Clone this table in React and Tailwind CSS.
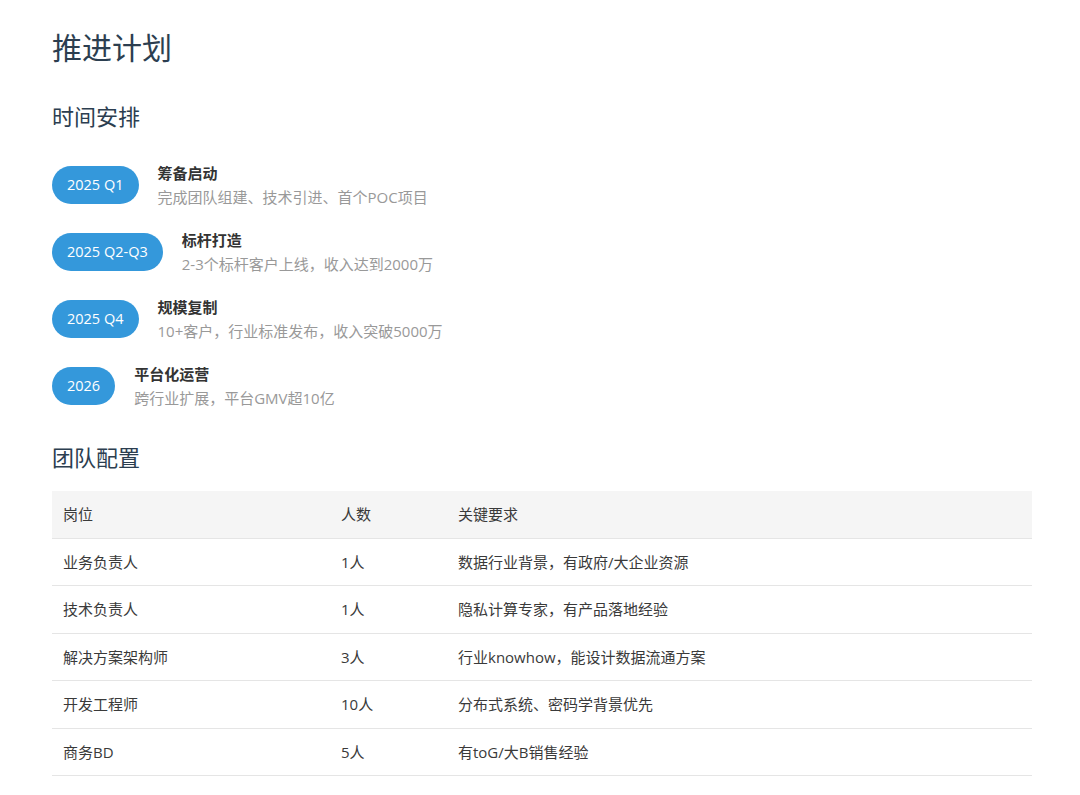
import React from "react";

const milestones = [
  { time: "2025 Q1", title: "筹备启动", desc: "完成团队组建、技术引进、首个POC项目" },
  { time: "2025 Q2-Q3", title: "标杆打造", desc: "2-3个标杆客户上线，收入达到2000万" },
  { time: "2025 Q4", title: "规模复制", desc: "10+客户，行业标准发布，收入突破5000万" },
  { time: "2026", title: "平台化运营", desc: "跨行业扩展，平台GMV超10亿" },
];

const team = [
  { role: "业务负责人", count: "1人", req: "数据行业背景，有政府/大企业资源" },
  { role: "技术负责人", count: "1人", req: "隐私计算专家，有产品落地经验" },
  { role: "解决方案架构师", count: "3人", req: "行业knowhow，能设计数据流通方案" },
  { role: "开发工程师", count: "10人", req: "分布式系统、密码学背景优先" },
  { role: "商务BD", count: "5人", req: "有toG/大B销售经验" },
];

const App = () => {
  return (
    <div
      className="bg-white min-h-screen pt-[30px] pl-[52px] pb-10"
      style={{ fontFamily: '"Open Sans", "Noto Sans CJK SC", sans-serif' }}
    >
      <div className="w-[980px]">
        <h1 className="text-[30px] leading-[36px] text-[#2c3e50]">推进计划</h1>

        <h2 className="mt-[36px] text-[22px] leading-[29px] text-[#2c3e50]">时间安排</h2>

        {/* timeline */}
        <div className="mt-[30px] flex flex-col gap-[19px]">
          {milestones.map((m) => (
            <div key={m.time} className="flex items-center gap-[19px] h-[48px]">
              <span className="rounded-full bg-[#3498db] text-white text-[14.5px] leading-[18px] px-[15px] py-[10px] whitespace-nowrap">
                {m.time}
              </span>
              <div className="flex flex-col">
                <p className="text-[15px] leading-[24px] font-bold text-[#333]">{m.title}</p>
                <p className="text-[15px] leading-[24px] text-[#999]">{m.desc}</p>
              </div>
            </div>
          ))}
        </div>

        <h2 className="mt-[33px] text-[22px] leading-[29px] text-[#2c3e50]">团队配置</h2>

        {/* team table */}
        <table className="mt-[19px] w-full table-fixed border-collapse text-[15px] leading-[22.5px] text-[#3a3a3a]">
          <thead>
            <tr className="bg-[#f5f5f5] border-b border-[#e5e5e5]">
              <th className="w-[278px] text-left font-normal px-[11px] py-[12px]">岗位</th>
              <th className="w-[117px] text-left font-normal px-[11px] py-[12px]">人数</th>
              <th className="text-left font-normal px-[11px] py-[12px]">关键要求</th>
            </tr>
          </thead>
          <tbody>
            {team.map((t) => (
              <tr key={t.role} className="border-b border-[#e5e5e5]">
                <td className="px-[11px] py-[12px]">{t.role}</td>
                <td className="px-[11px] py-[12px]">{t.count}</td>
                <td className="px-[11px] py-[12px]">{t.req}</td>
              </tr>
            ))}
          </tbody>
        </table>
      </div>
    </div>
  );
};

export default App;
